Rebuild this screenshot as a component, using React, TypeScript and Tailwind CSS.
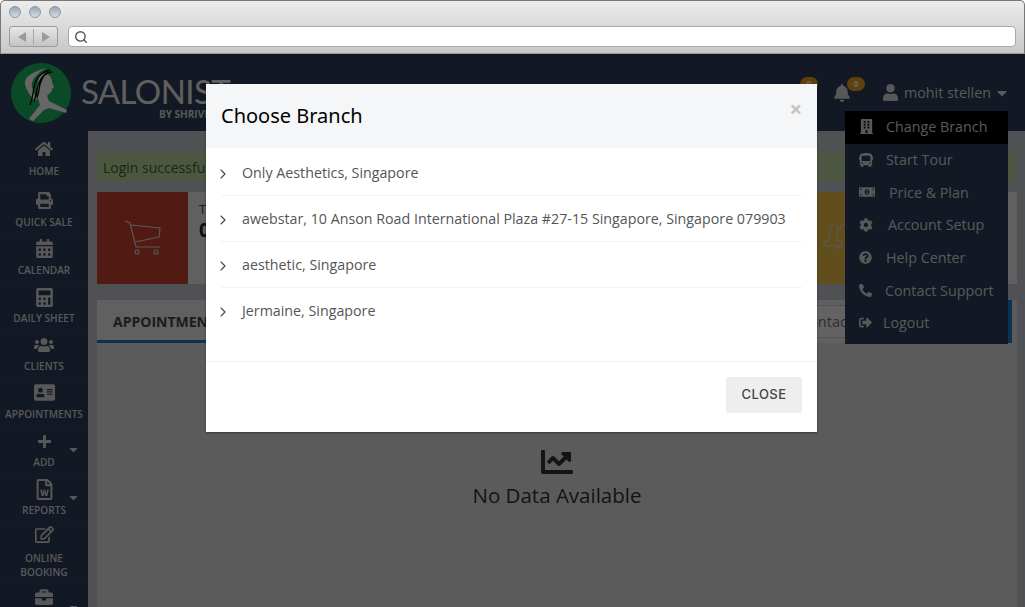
import { ChevronRight, Search } from 'lucide-react';
import {
  FaAddressCard,
  FaBell,
  FaBriefcase,
  FaBuilding,
  FaBus,
  FaCalculator,
  FaCalendarAlt,
  FaCaretDown,
  FaChartLine,
  FaCog,
  FaHome,
  FaMoneyBillAlt,
  FaPhoneAlt,
  FaPlus,
  FaPrint,
  FaQuestionCircle,
  FaRegEdit,
  FaRegFileWord,
  FaSignOutAlt,
  FaUser,
  FaUsers,
} from 'react-icons/fa';

const SIDE_ITEMS = [
  { label: 'HOME', icon: FaHome, row: 'h-[56px] pb-[8px]', size: 18, iconGap: 'mb-[6px]' },
  { label: 'QUICK SALE', icon: FaPrint, row: 'h-[48px] pb-[5px]', size: 17, iconGap: 'mb-[6px]' },
  { label: 'CALENDAR', icon: FaCalendarAlt, row: 'h-[48px] pb-[5px]', size: 19, iconGap: 'mb-[5px]' },
  { label: 'DAILY SHEET', icon: FaCalculator, row: 'h-[47px] pb-[4px]', size: 19, iconGap: 'mb-[4px]' },
  { label: 'CLIENTS', icon: FaUsers, row: 'h-[49px] pb-[5px]', size: 20, iconGap: 'mb-[4px]' },
  { label: 'APPOINTMENTS', icon: FaAddressCard, row: 'h-[47px] pb-[4px]', size: 21, iconGap: 'mb-[4px]' },
  { label: 'ADD', icon: FaPlus, row: 'h-[48px] pb-[4px]', size: 15, iconGap: 'mb-[6px]', caret: true },
  { label: 'REPORTS', icon: FaRegFileWord, row: 'h-[48px] pb-[4px]', size: 21, iconGap: 'mb-[3px]', caret: true },
  { label: 'ONLINE BOOKING', icon: FaRegEdit, row: 'h-[62px] pb-[4px]', size: 19, iconGap: 'mb-[7px]' },
  { label: '', icon: FaBriefcase, row: 'h-[48px] pb-[6px]', size: 18, iconGap: 'mb-[5px]', caret: true },
];

const MENU_ITEMS = [
  { label: 'Change Branch', icon: FaBuilding, size: 15, active: true, text: 'ml-[12px]' },
  { label: 'Start Tour', icon: FaBus, size: 14, text: 'ml-[13px]' },
  { label: 'Price & Plan', icon: FaMoneyBillAlt, size: 16, text: 'ml-[14px]' },
  { label: 'Account Setup', icon: FaCog, size: 14, text: 'ml-[15px]' },
  { label: 'Help Center', icon: FaQuestionCircle, size: 13, text: 'ml-[14px]' },
  { label: 'Contact Support', icon: FaPhoneAlt, size: 13, text: 'ml-[13px]' },
  { label: 'Logout', icon: FaSignOutAlt, size: 13, text: 'ml-[11px]' },
];

const BRANCHES = [
  'Only Aesthetics, Singapore',
  'awebstar, 10 Anson Road International Plaza #27-15 Singapore, Singapore 079903',
  'aesthetic, Singapore',
  'Jermaine, Singapore',
];

function BrowserBar() {
  return (
    <div className="h-[54px] shrink-0 rounded-t-[5px] border-x border-t border-b border-[#777] border-b-[#9a9a9a] bg-gradient-to-b from-[#ececec] to-[#c8c8c8] px-[8px] pt-[5px]">
      <div className="flex gap-[8px]">
        {[0, 1, 2].map((i) => (
          <span
            key={i}
            className="h-[12px] w-[12px] rounded-full border border-[#8d99a6] bg-gradient-to-b from-[#9aa6b2] to-[#d5dce3]"
          />
        ))}
      </div>
      <div className="mt-[8px] flex items-center gap-[10px]">
        <div className="flex h-[21px] w-[49px] items-center rounded-[3px] border border-[#9b9b9b] bg-gradient-to-b from-[#e6e6e6] to-[#c4c4c4]">
          <span className="flex flex-1 justify-center">
            <span className="h-0 w-0 border-y-[5px] border-r-[8px] border-y-transparent border-r-[#9a9a9a]" />
          </span>
          <span className="h-[15px] w-px bg-[#a5a5a5]" />
          <span className="flex flex-1 justify-center">
            <span className="h-0 w-0 border-y-[5px] border-l-[8px] border-y-transparent border-l-[#9a9a9a]" />
          </span>
        </div>
        <div className="flex h-[21px] w-[948px] items-center rounded-[4px] border border-[#a8a8a8] bg-white pl-[5px]">
          <Search size={14} strokeWidth={2.4} className="text-[#555]" />
        </div>
      </div>
    </div>
  );
}

function Logo() {
  return (
    <svg width="60" height="60" viewBox="0 0 60 60" className="shrink-0">
      <circle cx="30" cy="30" r="30" fill="#1cb863" />
      <path d="M35 5C24 8 13 13 14 21c1 7 7 13 10 18l2-4c-3-5-6-10-5-15 1-5 7-11 14-15z" fill="#fff" />
      <path
        d="M29 12c6-4 12 1 12 7l2 5-2 2c0 4-4 5-5 7l2 5 18 9-1 3-17-5-5 2-11 11-4-2 11-14-2-6c-1-8-1-19 2-24z"
        fill="#fff"
      />
      <path
        d="M39 7C30 9 24 16 23 25c-1 6-2 12-4 17M37 9c-6 4-10 10-11 18-1 5-2 9-3 12M41 9c-6 0-10 5-12 12-1 5-1 9-3 13"
        fill="none"
        stroke="#000"
        strokeWidth="1.3"
      />
    </svg>
  );
}

function Badge() {
  return (
    <span className="absolute -top-[7px] -right-[14px] flex h-[14px] w-[18px] items-center justify-center rounded-full bg-[#f0a020] font-['Open_Sans',sans-serif] text-[9px] font-bold text-white">
      0
    </span>
  );
}

function TopBar() {
  return (
    <div className="flex h-[77px] shrink-0 items-center bg-[#2f3c5a] pl-[11px]">
      <Logo />
      <div className="mt-[6px] ml-[10px] flex flex-col">
        <span className="font-['Lato',sans-serif] text-[33px] leading-[36px] tracking-[-0.6px] text-[#eee]">
          SALONIST
        </span>
        <span className="ml-[78px] font-['Open_Sans',sans-serif] text-[10px] leading-[10px] font-bold whitespace-nowrap text-[#ddd]">
          BY SHRIVRA
        </span>
      </div>
      <div className="ml-auto flex items-center pr-[15px]">
        <span className="relative mr-[15px] text-[#ddd]">
          <FaBell size={18} />
          <Badge />
        </span>
        <span className="relative ml-[14px] text-[#ddd]">
          <FaBell size={18} />
          <Badge />
        </span>
        <FaUser size={17} className="ml-[31px] text-[#ddd]" />
        <span className="ml-[5px] font-['Open_Sans',sans-serif] text-[14.3px] text-[#ddd]">
          mohit stellen
        </span>
        <FaCaretDown size={16} className="ml-[3px] text-[#ddd]" />
      </div>
    </div>
  );
}

function Sidebar() {
  return (
    <div className="w-[88px] shrink-0 bg-[#2f3c5a]">
      {SIDE_ITEMS.map(({ label, icon: Icon, row, size, iconGap, caret }) => (
        <div
          key={label || 'more'}
          className={`relative flex ${row} flex-col items-center justify-end border-b border-[#35425f] text-[#ddd]`}
        >
          <Icon size={size} className={iconGap} />
          <span className="min-h-[14px] px-[2px] text-center font-['Open_Sans',sans-serif] text-[10.1px] leading-[14px] font-semibold">
            {label}
          </span>
          {caret && <FaCaretDown size={13} className="absolute top-[17px] right-[8px]" />}
        </div>
      ))}
    </div>
  );
}

function StatCard({ color, title, children }: { color: string; title: string; children: React.ReactNode }) {
  return (
    <div className="flex h-[92px] bg-[#f0f0f0]">
      <div className={`flex w-[91px] shrink-0 items-center justify-center ${color}`}>{children}</div>
      <div className="pt-[9px] pl-[11px] font-['Open_Sans',sans-serif] text-[#444]">
        <div className="text-[13px] leading-[16px]">{title}</div>
        <div className="text-[19px] leading-[26px] font-bold text-[#222]">0</div>
      </div>
    </div>
  );
}

function PeopleIcon() {
  return (
    <svg width="34" height="30" viewBox="0 0 34 30" fill="none" stroke="#ddd" strokeWidth="1.2">
      <path d="M7 8c0-4 2-6 4-6s4 2 4 6c0 3-2 5-2 7 0 2 5 2 6 6v2H1v-2c1-4 6-4 6-6 0-2-2-4-2-7" />
      <path d="M17 7c0-4 3-6 5-6s5 2 5 6-3 6-3 8 6 3 8 7v3H13" />
    </svg>
  );
}

function Main() {
  return (
    <div className="min-w-0 flex-1 bg-[#c6cbd3] pt-[21px] pr-[8px] pl-[9px]">
      <div className="h-[30px] border border-dotted border-[#d0e0b4] bg-[#c0d6a4] pl-[5px] font-['Open_Sans',sans-serif] text-[14px] leading-[29px] text-[#3f6b1d]">
        Login successfully
      </div>
      <div className="mt-[10px] grid grid-cols-4 gap-[10px]">
        <StatCard color="bg-[#ca4130]" title="Total">
          <svg width="38" height="36" viewBox="0 0 38 36" fill="none" stroke="#ddd" strokeWidth="1.2">
            <path d="M1 1l5 2 6 24h24M7 5l29 3-1 9-24 5" />
            <circle cx="13" cy="32" r="2" />
            <circle cx="32" cy="32" r="2" />
          </svg>
        </StatCard>
        <StatCard color="bg-[#f3a41f]" title="Total">
          <PeopleIcon />
        </StatCard>
        <StatCard color="bg-[#4aa0d8]" title="Total">
          <PeopleIcon />
        </StatCard>
        <StatCard color="bg-[#f5c04a]" title="Total">
          <PeopleIcon />
        </StatCard>
      </div>
      <div className="mt-[16px] h-[400px] bg-[#e4e4e4]">
        <div className="mr-[5px] flex h-[43px] items-center border-r-[4px] border-r-[#1a80d0] bg-[#f0f0f0] pl-[16px]">
          <span className="flex h-full items-center font-['Open_Sans',sans-serif] text-[14px] font-bold text-[#445]">
            APPOINTMENTS
          </span>
          <div className="ml-auto h-[33px] w-[218px] border border-[#ccc] bg-[#f7f7f7] pl-[9px] font-['Open_Sans',sans-serif] text-[14.5px] leading-[31px] text-[#777]">
            Contact
          </div>
        </div>
        <div className="h-[3px] w-[114px] -translate-y-[3px] bg-[#1a80d0]" />
        <div className="flex flex-col items-center pt-[100px] font-['Open_Sans',sans-serif] text-[#333]">
          <FaChartLine size={32} />
          <span className="mt-[2px] text-[20.5px] leading-[30px]">No Data Available</span>
        </div>
      </div>
    </div>
  );
}

function UserMenu() {
  return (
    <div className="absolute top-[57px] left-[845px] w-[163px] bg-[#2f3c5a] pb-[4px] font-['Open_Sans',sans-serif] text-[14.3px] text-[#ddd]">
      {MENU_ITEMS.map(({ label, icon: Icon, size, active, text }) => (
        <div
          key={label}
          className={`flex h-[32.7px] items-center pb-[1px] pl-[14px] ${active ? 'bg-black' : ''}`}
        >
          <Icon size={size} className="shrink-0" />
          <span className={text}>{label}</span>
        </div>
      ))}
    </div>
  );
}

function BranchModal() {
  return (
    <div className="absolute inset-0 bg-black/60 pt-[30px] pl-[206px]">
      <div className="h-[348px] w-[611px] bg-white shadow-[0_1px_2px_rgba(0,0,0,0.4)]">
        <div className="relative flex h-[64px] items-center bg-[#f5f6f8] pl-[15px]">
          <h4 className="font-['Noto_Sans',sans-serif] text-[20px] text-black">Choose Branch</h4>
          <span className="absolute top-[12px] right-[15px] text-[22px] leading-[24px] font-bold text-[#c4c4c4]">
            ×
          </span>
        </div>
        <div className="h-[213px] px-[15px] pt-[2px]">
          {BRANCHES.map((name) => (
            <div
              key={name}
              className="flex h-[46px] items-center border-b border-[#f3f3f3] font-['Open_Sans',sans-serif] text-[14.25px] text-[#555] last:border-b-0"
            >
              <ChevronRight size={16} strokeWidth={1.6} className="mt-[2px] -ml-[6px] shrink-0 text-[#444]" />
              <span className="ml-[11px] whitespace-nowrap">{name}</span>
            </div>
          ))}
        </div>
        <div className="flex h-[71px] items-start justify-end border-t border-[#f0f0f0] pt-[15px] pr-[15px]">
          <button className="h-[36px] w-[76px] rounded-[2px] bg-[#eeeeee] font-['Inter',sans-serif] text-[13px] font-medium tracking-[0.5px] text-[#444]">
            CLOSE
          </button>
        </div>
      </div>
    </div>
  );
}

export default function App() {
  return (
    <div className="flex h-[607px] w-[1025px] flex-col overflow-hidden bg-white">
      <BrowserBar />
      <div className="relative min-h-0 flex-1 overflow-hidden">
        <TopBar />
        <div className="flex h-[500px]">
          <Sidebar />
          <Main />
        </div>
        <UserMenu />
        <BranchModal />
      </div>
    </div>
  );
}
